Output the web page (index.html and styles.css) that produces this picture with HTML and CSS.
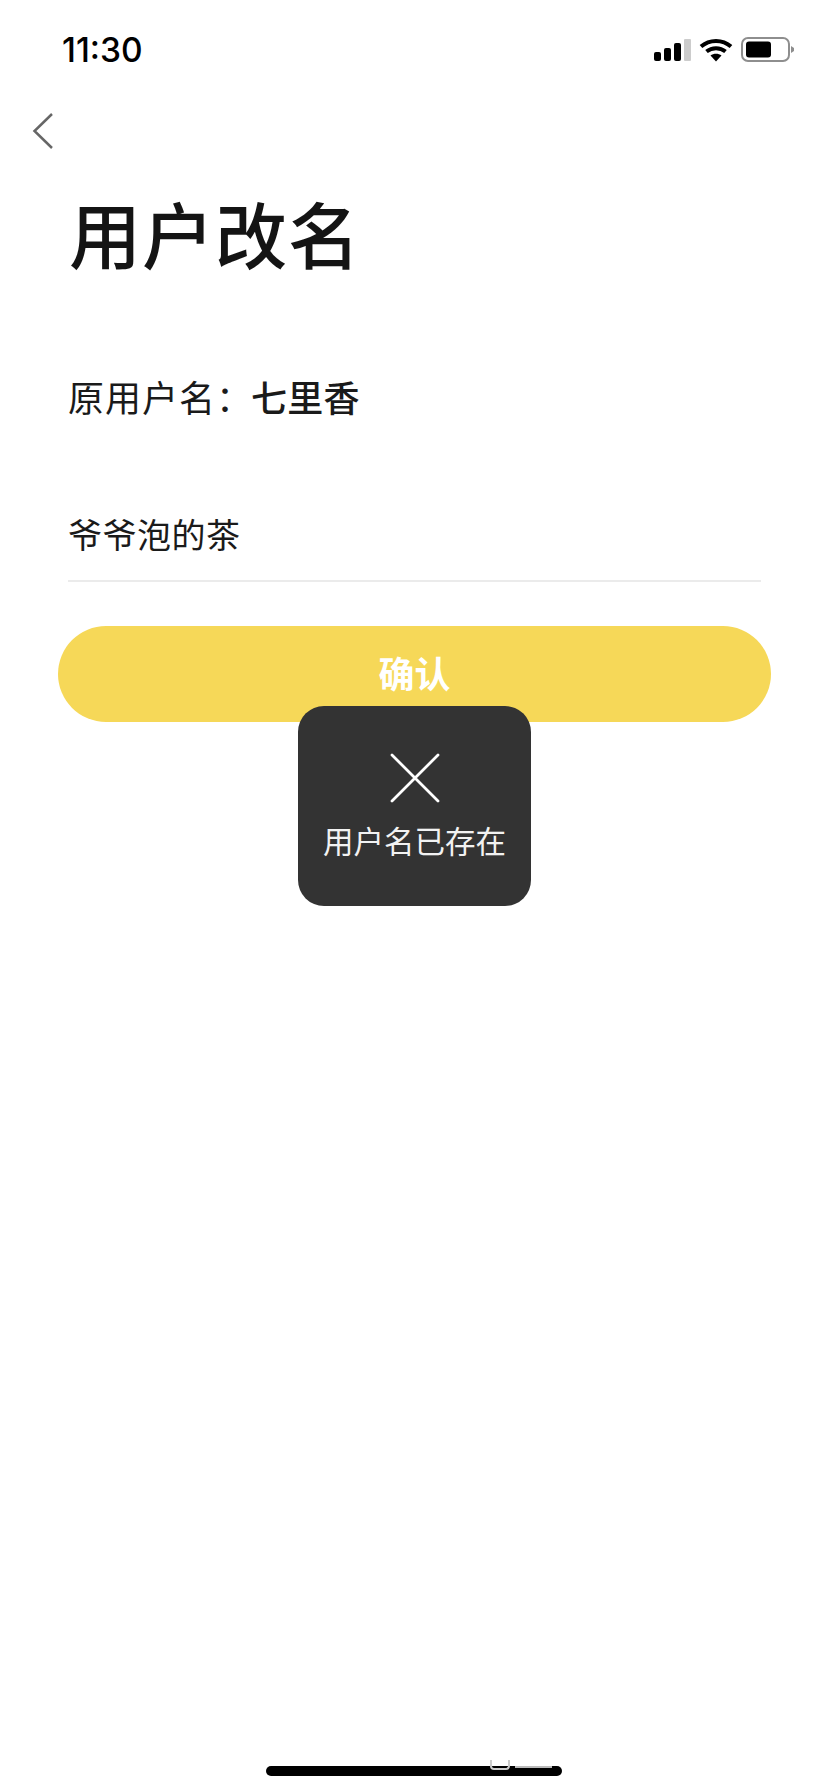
FILE: index.html
```html
<!DOCTYPE html>
<html lang="zh-CN">
<head>
  <meta charset="UTF-8">
  <meta name="viewport" content="width=device-width, initial-scale=1.0">
  <title>用户改名</title>
  <link rel="stylesheet" href="styles.css">
</head>
<body>

  <div class="status-bar">
    <span class="time">11:30</span>
    <div class="status-icons">
      <svg class="signal" width="38" height="24" viewBox="0 0 38 24">
        <rect x="1" y="14" width="7" height="9" rx="2" fill="#000"/>
        <rect x="11" y="10" width="7" height="13" rx="2" fill="#000"/>
        <rect x="21" y="5" width="7" height="18" rx="2" fill="#000"/>
        <rect x="31" y="1" width="7" height="22" rx="1" fill="#ccc"/>
      </svg>
      <svg class="wifi" width="34" height="24" viewBox="0 0 34 24">
        <path d="M2 8.500C10.500 1 23.500 1 32 8.500M7.500 13.500C13 9 21 9 26.500 13.500" fill="none" stroke="#000" stroke-width="4"/>
        <path d="M11.500 17.500C14.500 15 19.500 15 22.500 17.500L17 23.500Z" fill="#000"/>
      </svg>
      <svg class="battery" width="54" height="26" viewBox="0 0 54 26">
        <rect x="1" y="1" width="47" height="23" rx="6" fill="none" stroke="#8e8e8e" stroke-width="2"/>
        <rect x="5" y="4.500" width="25" height="16" rx="3" fill="#000"/>
        <path d="M50 9L53 11V14L50 16Z" fill="#8e8e8e"/>
      </svg>
    </div>
  </div>

  <div class="nav-bar">
    <svg width="22" height="38" viewBox="0 0 22 38">
      <path d="M20 2L2.500 19L20 36" fill="none" stroke="#666" stroke-width="2.500"/>
    </svg>
  </div>

  <div class="content">
    <h1 class="title">用户改名</h1>

    <p class="old-name">原用户名：<strong>七里香</strong></p>

    <div class="name-input">爷爷泡的茶</div>

    <button class="confirm-btn">确认</button>
  </div>

  <div class="toast">
    <svg width="50" height="50" viewBox="0 0 50 50">
      <path d="M2 2L48 48M48 2L2 48" fill="none" stroke="#fff" stroke-width="2.800" stroke-linecap="round"/>
    </svg>
    <span class="toast-text">用户名已存在</span>
  </div>

  <div class="home-bar">
    <span class="ghost-box"></span>
    <span class="ghost-line"></span>
  </div>

</body>
</html>
```

FILE: styles.css
```css
* {
  box-sizing: border-box;
}
html, body {
  margin: 0;
  padding: 0;
}
body {
  position: relative;
  width: 828px;
  height: 1792px;
  overflow: hidden;
  background: #fff;
  font-family: "Noto Sans CJK SC", "Noto Sans", sans-serif;
  color: #1a1a1a;
}
.status-bar {
  display: flex;
  justify-content: space-between;
  align-items: center;
  height: 99px;
  margin-bottom: 1px;
  padding: 0 33px 0 62px;
}
.time {
  font-family: Inter, "Liberation Sans", sans-serif;
  font-size: 33.500px;
  font-weight: 500;
  color: #000;
}
.status-icons {
  display: flex;
  align-items: center;
  gap: 8px;
}
.signal, .wifi, .battery {
  display: block;
}
.nav-bar {
  height: 50px;
  padding: 12px 0 0 32px;
}
.content {
  padding: 0 58px;
}
.title {
  margin: 37px 0 0 11px;
  font-size: 72px;
  line-height: 90px;
  font-weight: 500;
  letter-spacing: 1px;
  color: #141414;
}
.old-name {
  margin: 93px 0 0 10px;
  font-size: 36px;
  line-height: 52px;
  letter-spacing: 1px;
}
.old-name strong {
  margin-left: -2px;
  font-weight: 500;
  letter-spacing: 0.300px;
}
.name-input {
  margin: 90px 9px 0 10px;
  height: 70px;
  font-size: 34px;
  line-height: 44px;
  letter-spacing: 0.500px;
  border-bottom: 2px solid #ebebeb;
}
.confirm-btn {
  display: block;
  width: 713px;
  height: 96px;
  margin-top: 44px;
  padding: 0 0 4px;
  border: none;
  border-radius: 48px;
  background: #f6d858;
  color: #fff;
  font-family: inherit;
  font-size: 36px;
  font-weight: 700;
}
.toast {
  position: absolute;
  left: 298px;
  top: 706px;
  width: 233px;
  height: 200px;
  display: flex;
  flex-direction: column;
  align-items: center;
  padding-top: 47px;
  background: #333;
  border-radius: 26px;
}
.toast-text {
  margin-top: 15px;
  font-size: 30.500px;
  line-height: 44px;
  color: #f2f2f2;
}
.home-bar {
  position: absolute;
  left: 266px;
  top: 1766px;
  width: 296px;
  height: 10px;
  border-radius: 5px;
  background: #000;
}
.ghost-box {
  position: absolute;
  left: 224px;
  top: -6px;
  width: 20px;
  height: 10px;
  border: 2px solid #ccc;
  border-top: none;
  border-radius: 0 0 4px 4px;
}
.ghost-line {
  position: absolute;
  left: 249px;
  top: 0;
  width: 37px;
  height: 2px;
  background: #bbb;
}
```
